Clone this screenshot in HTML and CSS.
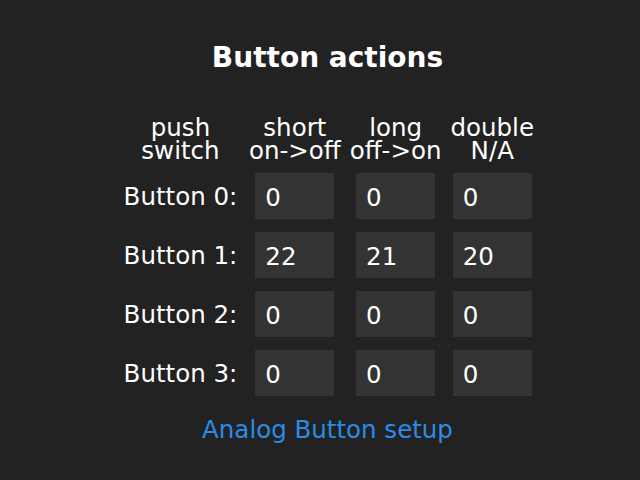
FILE: index.html
```html
<!DOCTYPE html>
<html lang="en">
<head>
<meta charset="utf-8">
<title>Button actions</title>
<link rel="stylesheet" href="styles.css">
</head>
<body>
<main class="page">
  <h1 class="title">Button actions</h1>
  <div class="grid">
    <div class="head">push<br>switch</div>
    <div class="head">short<br>on-&gt;off</div>
    <div class="head">long<br>off-&gt;on</div>
    <div class="head">double<br>N/A</div>

    <div class="label">Button 0:</div>
    <div class="cell"><input class="field" type="text" value="0"></div>
    <div class="cell"><input class="field" type="text" value="0"></div>
    <div class="cell"><input class="field" type="text" value="0"></div>

    <div class="label">Button 1:</div>
    <div class="cell"><input class="field" type="text" value="22"></div>
    <div class="cell"><input class="field" type="text" value="21"></div>
    <div class="cell"><input class="field" type="text" value="20"></div>

    <div class="label">Button 2:</div>
    <div class="cell"><input class="field" type="text" value="0"></div>
    <div class="cell"><input class="field" type="text" value="0"></div>
    <div class="cell"><input class="field" type="text" value="0"></div>

    <div class="label">Button 3:</div>
    <div class="cell"><input class="field" type="text" value="0"></div>
    <div class="cell"><input class="field" type="text" value="0"></div>
    <div class="cell"><input class="field" type="text" value="0"></div>
  </div>
  <a class="link" href="#">Analog Button setup</a>
</main>
</body>
</html>
```

FILE: styles.css
```css
html, body {
  margin: 0;
  padding: 0;
  background: #222222;
}

.page {
  display: flex;
  flex-direction: column;
  align-items: center;
  padding-left: 15px;
  font-family: "DejaVu Sans", Verdana, sans-serif;
  color: #ffffff;
}

.title {
  margin: 41px 0 0 0;
  font-size: 28px;
  line-height: 34px;
  font-weight: bold;
}

.grid {
  margin-top: 41px;
  display: grid;
  grid-template-columns: 119px auto auto auto;
  column-gap: 9px;
  row-gap: 13px;
  font-size: 24.5px;
}

.head {
  text-align: center;
  line-height: 23px;
  margin-bottom: -2px;
  white-space: nowrap;
}

.label {
  text-align: center;
  align-self: center;
  line-height: 28px;
  padding-top: 2px;
  white-space: nowrap;
}

.cell {
  display: flex;
  justify-content: center;
}

.field {
  box-sizing: border-box;
  width: 79px;
  height: 46px;
  margin: 0;
  border: none;
  padding: 3px 0 0 10px;
  background: #333333;
  color: #ffffff;
  font-family: "DejaVu Sans", Verdana, sans-serif;
  font-size: 24.5px;
  outline: none;
}

.link {
  margin-top: 20px;
  font-size: 24.5px;
  line-height: 28px;
  color: #2b8ce8;
  text-decoration: none;
}
```
